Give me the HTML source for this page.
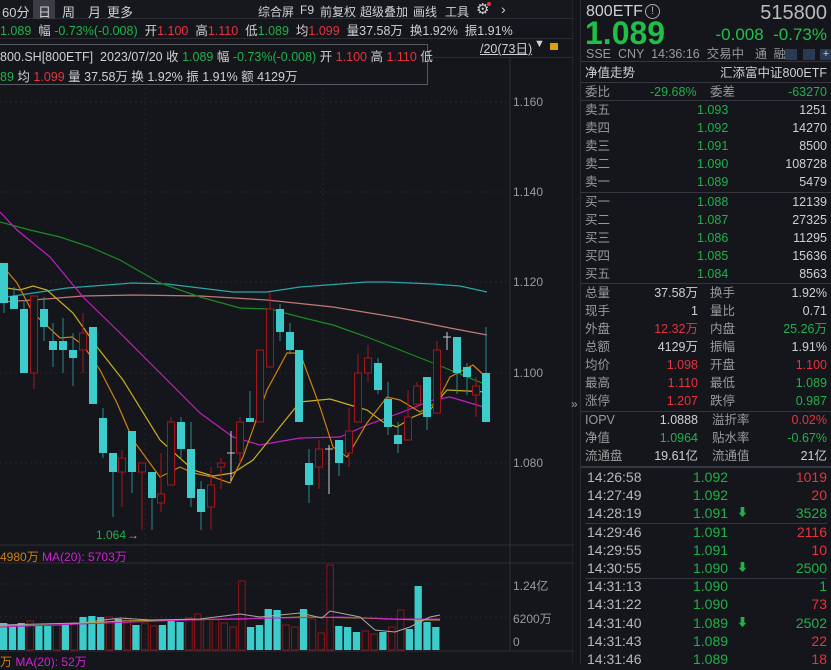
<!DOCTYPE html>
<html><head><meta charset="utf-8">
<style>
*{margin:0;padding:0;box-sizing:border-box}
body{width:831px;height:664px;background:#14161b;color:#c8c8c8;font-family:"Liberation Sans","Noto Sans CJK SC",sans-serif;font-size:12px;position:relative;overflow:hidden}
.a{position:absolute;white-space:nowrap}
.g{color:#22b04a}.r{color:#e8333c}.w{color:#d0d0d0}.gy{color:#9a9a9a}
#rp{position:absolute;left:580px;top:0;width:251px;height:664px;background:#14161b;border-left:1px solid #2a2d33}
.row{position:absolute;left:4px;right:4px;height:18px;font-size:12.5px;line-height:18px}
.row span{position:absolute;top:0;line-height:18px}
.hl{position:absolute;left:0;right:0;height:1px;background:#34373d}
.tb{font-size:12px;top:3px}
</style></head><body>

<div class="a" style="left:0;top:0;width:573px;height:19px;background:#16181d;border-bottom:1px solid #2a2d33"></div>
<div class="a" style="left:33px;top:0;width:22px;height:19px;background:#3a3d44"></div>
<div class="a w" style="left:2px;top:2px;font-size:13px">60分</div>
<div class="a w" style="left:38px;top:2px;font-size:13px">日</div>
<div class="a w" style="left:62px;top:2px;font-size:13px">周</div>
<div class="a w" style="left:88px;top:2px;font-size:13px">月</div>
<div class="a w" style="left:107px;top:2px;font-size:13px">更多</div>
<div class="a w tb" style="left:258px">综合屏</div>
<div class="a w tb" style="left:300px">F9</div>
<div class="a w tb" style="left:320px">前复权</div>
<div class="a w tb" style="left:360px">超级叠加</div>
<div class="a w tb" style="left:413px">画线</div>
<div class="a w tb" style="left:445px">工具</div>
<div class="a w" style="left:476px;top:0px;font-size:15px">⚙</div>
<div class="a" style="left:487px;top:2px;width:4px;height:4px;border-radius:2px;background:#e33"></div>
<div class="a w" style="left:501px;top:1px;font-size:14px">›</div>

<div class="a" style="left:0;top:20px;font-size:12.5px"><span class="g">1.089</span> &nbsp;<span class="w">幅</span> <span class="g">-0.73%(-0.008)</span> &nbsp;<span class="w">开</span><span class="r">1.100</span> &nbsp;<span class="w">高</span><span class="r">1.110</span> &nbsp;<span class="w">低</span><span class="g">1.089</span> &nbsp;<span class="w">均</span><span class="r">1.099</span> &nbsp;<span class="w">量37.58万 &nbsp;换1.92% &nbsp;振1.91%</span></div>
<div class="a" style="left:0;top:38px;width:573px;height:1px;background:#2a2d33"></div>
<div class="a" style="left:0;top:57px;width:573px;height:1px;background:#2a2d33"></div>

<svg class="a" style="left:0;top:0" width="573" height="664">
<g stroke="#24272d" stroke-width="1" stroke-dasharray="2,3">
<line x1="0" y1="102" x2="510" y2="102"/><line x1="0" y1="192" x2="510" y2="192"/><line x1="0" y1="282" x2="510" y2="282"/><line x1="0" y1="373" x2="510" y2="373"/><line x1="0" y1="463" x2="510" y2="463"/>
<line x1="145" y1="58" x2="145" y2="650"/><line x1="323" y1="58" x2="323" y2="650"/>
<line x1="0" y1="584" x2="510" y2="584"/><line x1="0" y1="617" x2="510" y2="617"/>
</g>
<g stroke="#2c2f35"><line x1="510" y1="58" x2="510" y2="651"/><line x1="573" y1="0" x2="573" y2="664"/>
<line x1="0" y1="545" x2="573" y2="545"/><line x1="0" y1="563" x2="573" y2="563"/><line x1="0" y1="651" x2="573" y2="651"/></g>
<g fill="none" stroke-width="1.2">
<polyline stroke="#2aa6a6" points="0,298 20,295 67,288 133,283 167,284 233,292 267,292 300,287 367,282 387,282 433,284 460,286 487,292"/>
<polyline stroke="#c27a78" points="0,302 33,300 83,296 133,295 200,296 267,300 333,307 400,318 450,328 487,335"/>
<polyline stroke="#1c8a24" points="0,222 30,230 60,237 90,247 120,260 160,283 200,297 240,308 270,309 300,317 333,325 367,337 400,350 433,363 487,385"/>
<polyline stroke="#c41ec4" points="0,212 17,230 50,257 83,297 117,330 160,373 200,413 233,437 260,445 300,438 340,437 367,425 400,413 433,400 450,397 487,408"/>
<polyline stroke="#c8b020" points="0,287 20,290 33,286 47,290 73,313 97,347 123,380 160,440 193,470 213,476 233,473 253,460 283,423 300,402 330,399 350,405 367,410 383,422 397,427 413,417 430,410 447,390 467,391 487,392"/>
<polyline stroke="#d08010" points="0,263 17,283 33,313 60,338 72,337 83,345 100,370 117,403 133,440 160,477 180,467 193,473 213,477 230,483 243,457 267,390 287,353 300,353 320,407 333,447 347,457 367,423 387,397 400,400 420,412 437,402 450,377 473,365 487,378"/>
</g>
<g id="c"></g>
<text x="96" y="539" fill="#22b04a" font-size="12">1.064</text><text x="127" y="539" fill="#aaa" font-size="12">→</text>
</svg>

<div class="a" style="left:-2px;top:44px;width:430px;height:41px;background:#14161b;border:1px solid #55585e"></div>
<div class="a" style="left:0;top:46px;font-size:12.5px"><span class="w">800.SH[800ETF] &nbsp;2023/07/20 收</span> <span class="g">1.089</span> <span class="w">幅</span> <span class="g">-0.73%(-0.008)</span> <span class="w">开</span> <span class="r">1.100</span> <span class="w">高</span> <span class="r">1.110</span> <span class="w">低</span></div>
<div class="a" style="left:0;top:66px;font-size:12.5px"><span class="g">89</span> <span class="w">均</span> <span class="r">1.099</span> <span class="w">量 37.58万 换 1.92% 振 1.91% 额 4129万</span></div>
<div class="a w" style="left:480px;top:38px;font-size:12.5px;text-decoration:underline">/20(73日)</div>
<div class="a w" style="left:534px;top:38px;font-size:11px">▼</div>
<div class="a" style="left:550px;top:43px;width:8px;height:7px;background:#d8a010"></div>

<div class="a gy" style="left:513px;top:95px">1.160</div>
<div class="a gy" style="left:513px;top:185px">1.140</div>
<div class="a gy" style="left:513px;top:275px">1.120</div>
<div class="a gy" style="left:513px;top:366px">1.100</div>
<div class="a gy" style="left:513px;top:456px">1.080</div>
<div class="a gy" style="left:513px;top:577px">1.24亿</div>
<div class="a gy" style="left:513px;top:610px">6200万</div>
<div class="a gy" style="left:513px;top:635px">0</div>
<div class="a gy" style="left:571px;top:397px;font-size:12px">»</div>
<div class="a" style="left:0;top:548px;font-size:12px"><span style="color:#d08010">4980万</span> <span style="color:#d020d0">MA(20): 5703万</span></div>
<div class="a" style="left:0;top:653px;font-size:12px"><span style="color:#d08010">万</span> <span style="color:#d020d0">MA(20): 52万</span></div>

<div id="rp">
<div class="a w" style="left:5px;top:2px;font-size:16px;line-height:20px">800ETF</div>
<div class="a" style="left:64px;top:4px;width:15px;height:15px;border:1.5px solid #aaa;border-radius:50%;font-size:11px;color:#aaa;text-align:center;line-height:12px">!</div>
<div class="a" style="right:4px;top:2px;font-size:20px;line-height:22px;color:#bbb">515800</div>
<div class="a g" style="left:4px;top:18px;font-size:32px;line-height:30px;font-weight:bold;color:#20c048">1.089</div>
<div class="a g" style="right:4px;top:25px;font-size:17px;line-height:20px;color:#20c048">-0.008 &nbsp;-0.73%</div>
<div class="a gy" style="left:5px;top:47px;font-size:12.5px;line-height:15px">SSE &nbsp;CNY &nbsp;14:36:16 &nbsp;交易中</div>
<div class="a gy" style="left:174px;top:47px;font-size:12px;line-height:15px">通 &nbsp;融</div>
<div class="a" style="left:204px;top:49px;width:12px;height:11px;background:#2a3a55"></div>
<div class="a" style="left:222px;top:49px;width:12px;height:11px;background:#2a3a55"></div>
<div class="a" style="left:239px;top:49px;width:12px;height:11px;background:#2a3a55;color:#ccc;font-size:11px;line-height:11px;text-align:center">+</div>
<div class="hl" style="top:61px"></div>
<div class="row w" style="top:64px"><span style="left:0">净值走势</span><span style="right:0">汇添富中证800ETF</span></div>
<div class="hl" style="top:82px"></div>
<div class="row" style="top:83px"><span class="gy" style="left:0">委比</span><span class="g" style="left:65px">-29.68%</span><span class="gy" style="left:125px">委差</span><span class="g" style="right:0">-63270</span></div>
<div class="hl" style="top:100px"></div>
<div id="ob"></div>
</div>

<script>
var rp=document.getElementById('ob'),h='';
function row(y,a,b,c,cb,d,e,ce,xl){h+='<div class="row" style="top:'+y+'px"><span class="gy" style="left:0">'+a+'</span><span class="'+cb+'" style="'+(d!==undefined?'right:129px':'left:112px')+'">'+b+'</span>'+(d!==undefined?'<span class="gy" style="left:'+(xl||125)+'px">'+c+'</span><span class="'+ce+'" style="right:0">'+d+'</span>':'<span class="w" style="right:0">'+c+'</span>')+'</div>';}
var s=[['卖五','1.093','1251'],['卖四','1.092','14270'],['卖三','1.091','8500'],['卖二','1.090','108728'],['卖一','1.089','5479']];
s.forEach(function(r,i){row(101+i*18,r[0],r[1],r[2],'g');});
h+='<div class="hl" style="top:192px"></div>';
var b=[['买一','1.088','12139'],['买二','1.087','27325'],['买三','1.086','11295'],['买四','1.085','15636'],['买五','1.084','8563']];
b.forEach(function(r,i){row(193+i*18,r[0],r[1],r[2],'g');});
h+='<div class="hl" style="top:283px"></div>';
var t=[['总量','37.58万','w','换手','1.92%','w'],['现手','1','w','量比','0.71','w'],['外盘','12.32万','r','内盘','25.26万','g'],['总额','4129万','w','振幅','1.91%','w'],['均价','1.098','r','开盘','1.100','r'],['最高','1.110','r','最低','1.089','g'],['涨停','1.207','r','跌停','0.987','g']];
t.forEach(function(r,i){row(284+i*18,r[0],r[1],r[3],r[2],r[4],0,r[5]);});
h+='<div class="hl" style="top:411px"></div>';
var u=[['IOPV','1.0888','w','溢折率','0.02%','r'],['净值','1.0964','g','贴水率','-0.67%','g'],['流通盘','19.61亿','w','流通值','21亿','w']];
u.forEach(function(r,i){row(411+i*18,r[0],r[1],r[3],r[2],r[4],0,r[5],127);});
h+='<div class="hl" style="top:466px;height:2px"></div>';
var d=[['14:26:58','1.092','1019','r',0],['14:27:49','1.092','20','r',0],['14:28:19','1.091','3528','g',1],['14:29:46','1.091','2116','r',0],['14:29:55','1.091','10','r',0],['14:30:55','1.090','2500','g',1],['14:31:13','1.090','1','g',0],['14:31:22','1.090','73','r',0],['14:31:40','1.089','2502','g',1],['14:31:43','1.089','22','r',0],['14:31:46','1.089','18','r',0]];
d.forEach(function(r,i){var y=468+i*18.2;h+='<div class="row" style="top:'+y+'px;font-size:14px;height:19px"><span class="gy" style="left:2px;color:#b8b8b8">'+r[0]+'</span><span class="g" style="left:108px">'+r[1]+'</span>'+(r[4]?'<span class="g" style="left:152px;font-size:11px">⬇</span>':'')+'<span class="'+r[3]+'" style="right:0">'+r[2]+'</span></div>';if(i==2||i==5)h+='<div class="hl" style="top:'+(y+18.5)+'px;left:4px;right:4px"></div>';});
rp.innerHTML=h;

var C=[['c',0,263,303,263,313],['c',10,296,309,287,309],['c',20,309,373,300,373],['r',30,296,373,296,389],['c',40,309,327,297,341],['c',49,341,350,323,367],['c',59,341,350,318,373],['c',69,350,358,333,386],['r',79,333,350,313,373],['c',89,327,404,327,404],['c',99,418,453,408,458],['c',109,453,472,453,517],['r',118,458,472,450,507],['c',128,431,472,431,493],['r',138,463,472,463,530],['c',148,472,498,472,530],['r',157,494,503,453,512],['r',167,422,485,417,485],['c',177,422,449,417,458],['c',187,449,498,422,507],['c',197,489,512,481,530],['r',207,485,507,467,530],['r',217,463,467,458,489],['x',227,453,453,431,481],['r',236,422,453,417,463],['c',246,418,422,391,422],['r',256,350,422,350,422],['r',266,309,367,292,367],['c',276,309,332,304,341],['c',286,332,350,323,354],['c',295,350,422,350,422],['c',305,463,485,449,503],['r',315,449,467,440,489],['x',325,449,449,445,494],['c',335,440,463,440,476],['r',345,431,453,408,467],['r',354,373,422,354,422],['r',364,358,373,345,382],['c',374,363,390,358,394],['c',384,399,427,382,435],['c',394,435,444,422,453],['r',404,417,440,390,440],['r',413,386,404,382,408],['c',423,377,417,377,430],['r',433,350,413,341,413],['x',443,337,337,332,350],['c',453,337,373,337,394],['c',463,367,377,363,395],['r',472,386,395,377,417],['c',482,373,422,327,422]];
var g='';
C.forEach(function(k){var cx=k[1]+4;var col=k[0]=='c'?'#3ccccc':k[0]=='r'?'#a3161c':'#cccccc';
g+='<line x1="'+cx+'" y1="'+k[4]+'" x2="'+cx+'" y2="'+k[5]+'" stroke="'+(k[0]=='c'?'#2a8c8c':col)+'"/>';
if(k[0]=='c')g+='<rect x="'+k[1]+'" y="'+k[2]+'" width="8" height="'+Math.max(2,k[3]-k[2])+'" fill="#3ccccc"/>';
else if(k[0]=='r')g+='<rect x="'+(k[1]+.5)+'" y="'+k[2]+'" width="7" height="'+Math.max(2,k[3]-k[2])+'" fill="#14161b" stroke="#a3161c"/>';
else g+='<line x1="'+k[1]+'" y1="'+k[2]+'" x2="'+(k[1]+8)+'" y2="'+k[2]+'" stroke="#ccc"/>';});
var V='c623 c626 c623 r621 c626 c626 r625 c625 r623 c617 c616 c617 r617 c619 r619 c625 r623 r626 c625 c620 c622 r618 r614 r619 r619 r623 r627 r581 c627 c625 c609 c610 r625 r627 c609 r619 r633 r565 c626 c627 c632 r631 r634 c632 r627 r610 c629 c586 c622 c627'.split(' ');
V.forEach(function(v,i){var x=i*8.82,y=+v.slice(1);if(v[0]=='c')g+='<rect x="'+x+'" y="'+y+'" width="7.3" height="'+(650-y)+'" fill="#3ccccc"/>';else g+='<rect x="'+(x+.5)+'" y="'+y+'" width="6.5" height="'+(650-y)+'" fill="none" stroke="#8e1418"/>';});
g+='<polyline fill="none" stroke="#c8a020" points="0,626 60,625 120,621 180,620 240,619 300,617 360,618 420,620 440,620"/>';
g+='<polyline fill="none" stroke="#c41ec4" points="0,627 80,624 160,621 220,619 280,618 340,617 400,619 440,619"/>';
g+='<polyline fill="none" stroke="#aaa" points="0,625 40,624 80,623 120,618 150,620 200,619 240,614 260,617 300,613 322,618 330,611 360,617 375,630 395,632 410,627 420,622 430,617 440,615"/>';
document.getElementById('c').innerHTML=g;
</script>
</body></html>
